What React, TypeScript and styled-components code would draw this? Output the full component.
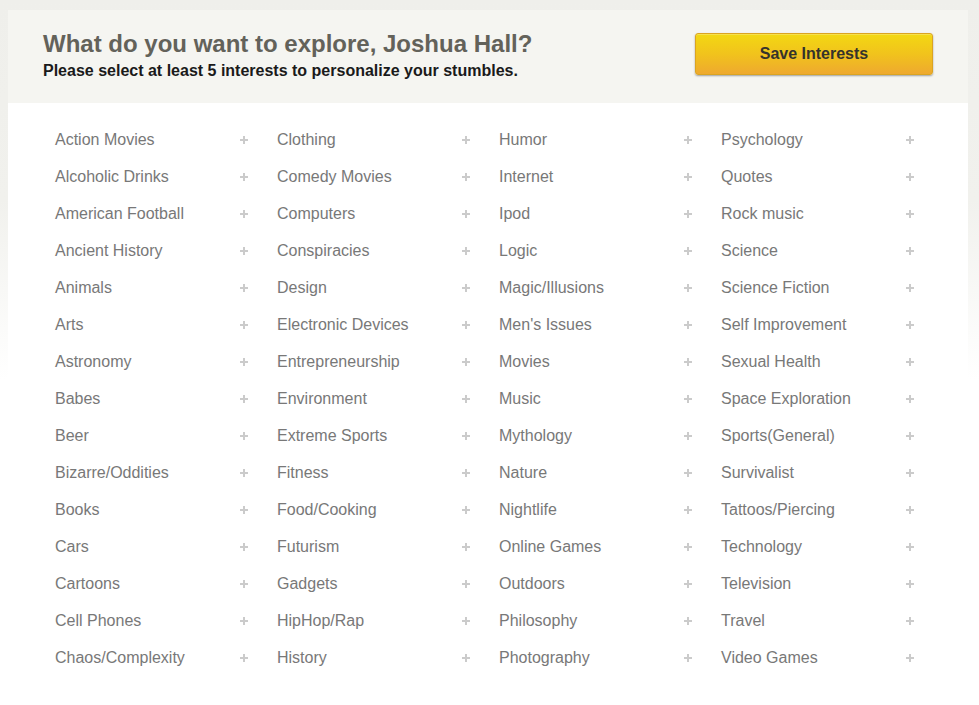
import React from "react";
import styled, { createGlobalStyle } from "styled-components";

const GlobalStyle = createGlobalStyle`
  html, body {
    margin: 0;
    padding: 0;
  }
  body {
    background: #fff linear-gradient(to bottom, #efefeb 0px, #f1f1ed 200px, #ffffff 380px) no-repeat;
    font-family: "Liberation Sans", Arial, Helvetica, sans-serif;
    min-height: 705px;
  }
`;

const Page = styled.div`
  padding: 10px 11px 0 8px;
`;

const Panel = styled.div`
  width: 960px;
  background: #fff;
  min-height: 695px;
`;

const Header = styled.header`
  box-sizing: border-box;
  height: 93px;
  background: #f5f5f1;
  padding: 22px 35px 0 35px;
  display: flex;
  justify-content: space-between;
  align-items: flex-start;
`;

const TitleBlock = styled.div`
  display: flex;
  flex-direction: column;
`;

const Title = styled.h1`
  margin: 0;
  font-size: 24px;
  line-height: 24px;
  font-weight: bold;
  color: #63625a;
`;

const Subtitle = styled.p`
  margin: 7px 0 0 0;
  font-size: 16px;
  line-height: 16px;
  font-weight: bold;
  color: #1a1a1a;
`;

const SaveButton = styled.button`
  margin-top: 1px;
  width: 238px;
  height: 42px;
  border: 1px solid #dba421;
  border-radius: 3px;
  background: linear-gradient(to bottom, #f3d812 0%, #f1c31c 50%, #eea92f 100%);
  box-shadow: 0 1px 2px rgba(0, 0, 0, 0.35), inset 0 1px 0 rgba(255, 255, 255, 0.25);
  font-family: "Liberation Sans", Arial, sans-serif;
  font-size: 16px;
  font-weight: bold;
  color: #35332c;
  cursor: pointer;
  padding: 0;
`;

const Grid = styled.ul`
  list-style: none;
  margin: 0;
  padding: 18px 0 20px 47px;
  display: grid;
  grid-template-columns: repeat(4, 193px);
  grid-template-rows: repeat(15, 37px);
  grid-auto-flow: column;
  column-gap: 29px;
`;

const Item = styled.li`
  display: flex;
  align-items: center;
  justify-content: space-between;
  font-size: 16px;
  line-height: 37px;
  color: #787878;
  cursor: pointer;
`;

const Plus = styled.span`
  position: relative;
  display: block;
  width: 8px;
  height: 8px;
  margin-top: 1px;
  &::before,
  &::after {
    content: "";
    position: absolute;
    background: #cbcbcb;
  }
  &::before {
    left: 0;
    top: 3px;
    width: 8px;
    height: 2px;
  }
  &::after {
    left: 3px;
    top: 0;
    width: 2px;
    height: 8px;
  }
`;

const interests = [
  "Action Movies", "Alcoholic Drinks", "American Football", "Ancient History", "Animals",
  "Arts", "Astronomy", "Babes", "Beer", "Bizarre/Oddities", "Books", "Cars", "Cartoons",
  "Cell Phones", "Chaos/Complexity",
  "Clothing", "Comedy Movies", "Computers", "Conspiracies", "Design", "Electronic Devices",
  "Entrepreneurship", "Environment", "Extreme Sports", "Fitness", "Food/Cooking", "Futurism",
  "Gadgets", "HipHop/Rap", "History",
  "Humor", "Internet", "Ipod", "Logic", "Magic/Illusions", "Men's Issues", "Movies", "Music",
  "Mythology", "Nature", "Nightlife", "Online Games", "Outdoors", "Philosophy", "Photography",
  "Psychology", "Quotes", "Rock music", "Science", "Science Fiction", "Self Improvement",
  "Sexual Health", "Space Exploration", "Sports(General)", "Survivalist", "Tattoos/Piercing",
  "Technology", "Television", "Travel", "Video Games",
];

export default function App() {
  return (
    <>
      <GlobalStyle />
      <Page>
        <Panel>
          <Header>
            <TitleBlock>
              <Title>What do you want to explore, Joshua Hall?</Title>
              <Subtitle>Please select at least 5 interests to personalize your stumbles.</Subtitle>
            </TitleBlock>
            <SaveButton>Save Interests</SaveButton>
          </Header>
          <Grid>
            {interests.map((name) => (
              <Item key={name}>
                <span>{name}</span>
                <Plus aria-label="add" />
              </Item>
            ))}
          </Grid>
        </Panel>
      </Page>
    </>
  );
}
